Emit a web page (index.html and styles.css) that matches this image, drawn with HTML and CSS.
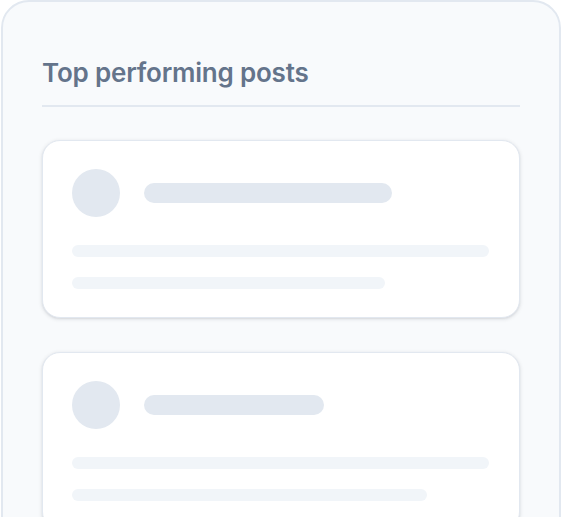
FILE: index.html
```html
<!DOCTYPE html>
<html lang="en">
<head>
<meta charset="utf-8">
<title>Top performing posts</title>
<link rel="stylesheet" href="styles.css">
</head>
<body>
<section class="panel">
  <header class="panel-header">
    <h2 class="panel-title">Top performing posts</h2>
  </header>
  <div class="post-list">
    <article class="post-card">
      <div class="post-head">
        <div class="avatar"></div>
        <div class="bar bar-title" style="width:248px"></div>
      </div>
      <div class="post-body">
        <div class="bar bar-line" style="width:417px"></div>
        <div class="bar bar-line" style="width:313px"></div>
      </div>
    </article>
    <article class="post-card">
      <div class="post-head">
        <div class="avatar"></div>
        <div class="bar bar-title" style="width:180px"></div>
      </div>
      <div class="post-body">
        <div class="bar bar-line" style="width:417px"></div>
        <div class="bar bar-line" style="width:355px"></div>
      </div>
    </article>
  </div>
</section>
</body>
</html>
```
FILE: styles.css
```css
html, body {
  margin: 0;
  padding: 0;
  background: #ffffff;
  overflow: hidden;
  height: 517px;
}

body {
  font-family: Inter, "Noto Sans", sans-serif;
}

.panel {
  box-sizing: border-box;
  margin-left: 1px;
  width: 560px;
  min-height: 700px;
  background: #f8fafc;
  border: 2px solid #e2e8f0;
  border-radius: 28px;
  padding: 55px 39px 40px 39px;
}

.panel-header {
  padding-bottom: 16px;
  border-bottom: 2px solid #e2e8f0;
}

.panel-title {
  margin: 0;
  font-size: 26px;
  line-height: 32px;
  font-weight: 600;
  color: #64748b;
  letter-spacing: -0.2px;
}

.post-list {
  display: flex;
  flex-direction: column;
  gap: 34px;
  margin-top: 33px;
}

.post-card {
  background: #ffffff;
  border: 1px solid #e2e8f0;
  border-radius: 18px;
  padding: 28px 29px;
  box-shadow: 0 1px 4px rgba(15, 23, 42, 0.12), 0 1px 2px rgba(15, 23, 42, 0.06);
  display: flex;
  flex-direction: column;
  gap: 28px;
}

.post-head {
  display: flex;
  align-items: center;
  gap: 24px;
}

.avatar {
  width: 48px;
  height: 48px;
  border-radius: 50%;
  background: #e2e8f0;
  flex: none;
}

.bar {
  border-radius: 999px;
}

.bar-title {
  height: 20px;
  background: #e2e8f0;
}

.post-body {
  display: flex;
  flex-direction: column;
  gap: 20px;
}

.bar-line {
  height: 12px;
  background: #f1f5f9;
}
```
